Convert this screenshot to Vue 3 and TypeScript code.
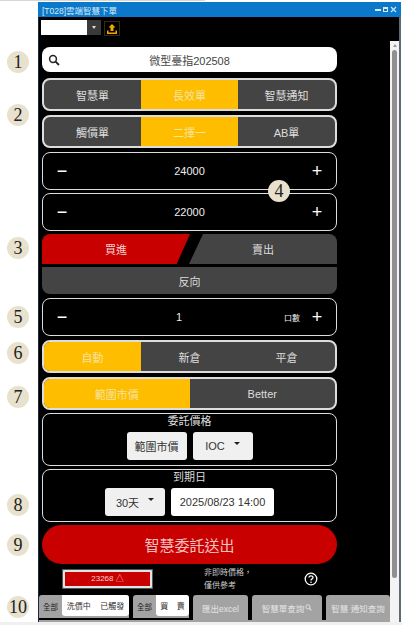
<script setup lang="ts">
// 雲端智慧下單 畫面
const badges = [
  { n: 1, x: 18, y: 62 },
  { n: 2, x: 18, y: 115 },
  { n: 3, x: 18, y: 248 },
  { n: 4, x: 279, y: 191 },
  { n: 5, x: 18, y: 317 },
  { n: 6, x: 18, y: 353 },
  { n: 7, x: 18, y: 397 },
  { n: 8, x: 18, y: 505 },
  { n: 9, x: 18, y: 545 },
  { n: 10, x: 18, y: 607 },
];
</script>

<template>
  <div class="page">
    <div class="window">
      <div class="titlebar">
        <span class="title">[T028]雲端智慧下單</span>
        <span class="win-btns">
          <i class="w-min"></i><i class="w-max"></i>
          <svg width="7" height="7" viewBox="0 0 7 7"><path d="M1 1l5 5M6 1l-5 5" stroke="#cfe6f7" stroke-width="1.2" /></svg>
        </span>
      </div>

      <div class="frame">
        <div class="toolbar">
          <div class="acct"></div>
          <div class="acct-arrow"><i class="caret small"></i></div>
          <div class="upload">
            <svg width="12" height="12" viewBox="0 0 12 12">
              <path d="M6 1L9.5 4.6H7.5V8H4.5V4.6H2.5z" fill="#f5a800" />
              <path d="M1 7.5V11H11V7.5H9.5V9.6H2.5V7.5z" fill="#f5a800" />
            </svg>
          </div>
        </div>

        <div class="body">
          <div class="main">
            <div class="content">
              <div class="search">
                <svg class="search-icon" width="12" height="12" viewBox="0 0 12 12">
                  <circle cx="5" cy="5" r="3.4" fill="none" stroke="#222" stroke-width="1.5" />
                  <path d="M7.6 7.6L11 11" stroke="#222" stroke-width="1.8" />
                </svg>
                <span>微型臺指202508</span>
              </div>

              <div class="seg">
                <div class="seg-item">智慧單</div>
                <div class="seg-item on">長效單</div>
                <div class="seg-item">智慧通知</div>
              </div>
              <div class="seg">
                <div class="seg-item">觸價單</div>
                <div class="seg-item on">二擇一</div>
                <div class="seg-item">AB單</div>
              </div>

              <div class="stepper">
                <span class="minus">−</span><span class="val">24000</span><span class="plus">+</span>
              </div>
              <div class="stepper">
                <span class="minus">−</span><span class="val">22000</span><span class="plus">+</span>
              </div>

              <div class="buysell">
                <div class="buy">買進</div>
                <div class="sell">賣出</div>
              </div>
              <div class="reverse">反向</div>

              <div class="stepper qty">
                <span class="minus">−</span><span class="val">1</span><span class="unit">口數</span><span class="plus">+</span>
              </div>

              <div class="seg">
                <div class="seg-item on">自動</div>
                <div class="seg-item">新倉</div>
                <div class="seg-item">平倉</div>
              </div>
              <div class="seg">
                <div class="seg-item on">範圍市價</div>
                <div class="seg-item">Better</div>
              </div>

              <div class="box">
                <div class="box-title">委託價格</div>
                <div class="box-row">
                  <div class="chip gray w60">範圍市價</div>
                  <div class="chip gray w60">IOC<i class="caret"></i></div>
                </div>
              </div>
              <div class="box">
                <div class="box-title">到期日</div>
                <div class="box-row">
                  <div class="chip gray w60">30天<i class="caret"></i></div>
                  <div class="chip white w103">2025/08/23 14:00</div>
                </div>
              </div>

              <div class="submit">智慧委託送出</div>

              <div class="info">
                <div class="price"><div class="price-in">23268 △</div></div>
                <div class="note">非即時價格，<br />僅供參考</div>
                <svg class="help" width="14" height="14" viewBox="0 0 14 14">
                  <circle cx="7" cy="7" r="5.8" fill="none" stroke="#fff" stroke-width="1.3" />
                  <path d="M5 5.6C5 3.2 9 3.2 9 5.5C9 7 7 6.8 7 8.4" fill="none" stroke="#fff" stroke-width="1.3" />
                  <circle cx="7" cy="10.2" r=".8" fill="#fff" />
                </svg>
              </div>
            </div>

            <!-- 下方頁籤 -->
            <div class="tabs">
              <div class="tab-group first">
                <span class="g">全部</span>
                <span class="w"><b>洗價中</b><b>已觸發</b></span>
              </div>
              <div class="tab-group second">
                <span class="g">全部</span>
                <span class="w"><b>買</b><b>賣</b></span>
              </div>
              <div class="tab-btn t1">匯出excel</div>
              <div class="tab-btn t2">
                智慧單查詢
                <svg width="7" height="7" viewBox="0 0 12 12">
                  <circle cx="5" cy="5" r="3.6" fill="none" stroke="#e4e4e4" stroke-width="1.6" />
                  <path d="M7.6 7.6L11 11" stroke="#e4e4e4" stroke-width="1.8" />
                </svg>
              </div>
              <div class="tab-btn t3">智慧 通知查詢</div>
            </div>
          </div>

          <div class="scrollbar">
            <i class="arrow-up"></i>
            <div class="thumb"></div>
          </div>
        </div>
      </div>
    </div>

    <span v-for="b in badges" :key="b.n" class="badge" :style="{ left: b.x - 11 + 'px', top: b.y - 11 + 'px' }">{{ b.n }}</span>
  </div>
</template>

<style scoped>
.page {
  position: relative;
  width: 402px;
  height: 625px;
  background: #fff;
  padding: 2px 1px 3px 38px;
  box-sizing: border-box;
  overflow: hidden;
  font-family: "Liberation Sans", "Noto Sans CJK TC", sans-serif;
  color: #e6e6e6;
}

.page::before {
  content: "";
  position: absolute;
  left: 0;
  top: 0;
  width: 205px;
  height: 1px;
  background: #d8d8d8;
}

.page::after {
  content: "";
  position: absolute;
  left: 0;
  bottom: 0;
  width: 100%;
  height: 3px;
  background: #f0f0f0;
}

.window {
  height: 100%;
  background: #000;
  display: flex;
  flex-direction: column;
}

.titlebar {
  height: 15px;
  flex: none;
  background: #0b78c9;
  display: flex;
  align-items: center;
  justify-content: space-between;
  padding: 0 4px 0 4px;
  font-size: 8.5px;
  color: #d5e9f8;
}

.win-btns {
  display: flex;
  align-items: center;
  gap: 2px;
}

.w-min {
  width: 6px;
  height: 2px;
  background: #d5e9f8;
}

.w-max {
  width: 5px;
  height: 5px;
  border: 1px solid #d5e9f8;
  border-top-width: 2px;
  box-sizing: border-box;
}

.frame {
  flex: 1;
  min-height: 0;
  display: flex;
  flex-direction: column;
  border-left: 1px solid #1c2a38;
  border-right: 2px solid #5f6b74;
}

.toolbar {
  height: 24px;
  flex: none;
  display: flex;
  align-items: flex-start;
  padding: 3px 0 0 2px;
  box-sizing: border-box;
}

.acct {
  width: 46px;
  height: 15px;
  background: #fff;
}

.acct-arrow {
  width: 14px;
  height: 15px;
  background: #3a3a3a;
  display: flex;
  align-items: center;
  justify-content: center;
}

.upload {
  width: 16px;
  height: 15px;
  margin: 1px 0 0 3px;
  border: 1px solid #3b2c08;
  box-sizing: border-box;
  display: flex;
  align-items: center;
  justify-content: center;
}

.caret {
  display: inline-block;
  width: 0;
  height: 0;
  margin: 0 0 5px 9px;
  border-left: 3px solid transparent;
  border-right: 3px solid transparent;
  border-top: 3px solid #222;
}

.caret.small {
  margin: 0;
  border-left-width: 2.5px;
  border-right-width: 2.5px;
  border-top: 3px solid #ddd;
}

.body {
  flex: 1;
  min-height: 0;
  display: flex;
}

.main {
  flex: 1;
  min-width: 0;
  display: flex;
  flex-direction: column;
  justify-content: space-between;
}

.content {
  width: 295px;
  margin-left: 3px;
  display: flex;
  flex-direction: column;
  padding-top: 6px;
}

.search {
  position: relative;
  height: 25px;
  flex: none;
  background: #fff;
  border-radius: 8px;
  display: flex;
  align-items: center;
  justify-content: center;
  font-size: 11px;
  color: #444;
}

.search-icon {
  position: absolute;
  left: 6px;
  top: 7px;
}

.seg {
  height: 33px;
  flex: none;
  margin-top: 4px;
  border: 2px solid #ddd;
  border-radius: 8px;
  overflow: hidden;
  display: flex;
  box-sizing: border-box;
  background: #444;
}

.search + .seg {
  margin-top: 6px;
}

.seg-item {
  flex: 1;
  display: flex;
  align-items: center;
  justify-content: center;
  font-size: 11px;
  color: #ddd;
}

.seg-item.on {
  background: #ffbd00;
  color: #f6e3a0;
}

.stepper {
  height: 38px;
  flex: none;
  margin-top: 4px;
  border: 1px solid #ddd;
  border-radius: 8px;
  display: flex;
  align-items: center;
  padding: 0 13px;
  box-sizing: border-box;
  font-size: 11px;
  color: #eee;
}

.stepper + .stepper {
  margin-top: 3px;
}

.minus,
.plus {
  font-size: 18px;
  line-height: 18px;
  width: 12px;
  text-align: center;
  color: #fff;
}

.val {
  flex: 1;
  text-align: center;
}

.qty .val {
  padding-left: 6px;
}

.unit {
  font-size: 8px;
  margin-right: 11px;
}

.buysell {
  height: 30px;
  flex: none;
  margin-top: 3px;
  border-radius: 8px 8px 0 0;
  overflow: hidden;
  display: flex;
  font-size: 11px;
}

.buy {
  width: 148px;
  background: #c80000;
  clip-path: polygon(0 0, 100% 0, 91% 100%, 0 100%);
  display: flex;
  align-items: center;
  justify-content: center;
  color: #f6d5d5;
}

.sell {
  flex: 1;
  margin-left: -1px;
  background: #444;
  clip-path: polygon(9.5% 0, 100% 0, 100% 100%, 0 100%);
  display: flex;
  align-items: center;
  justify-content: center;
  color: #ddd;
}

.reverse {
  height: 27px;
  flex: none;
  margin-top: 3px;
  background: #444;
  border-radius: 0 0 8px 8px;
  display: flex;
  align-items: center;
  justify-content: center;
  font-size: 11px;
  color: #ddd;
}

.box {
  height: 53px;
  flex: none;
  margin-top: 3px;
  border: 1px solid #ddd;
  border-radius: 8px;
  box-sizing: border-box;
  text-align: center;
}

.box-title {
  font-size: 11px;
  line-height: 14px;
  color: #ddd;
}

.box-row {
  display: flex;
  justify-content: center;
  gap: 6px;
  margin-top: 4px;
}

.chip {
  height: 28px;
  border-radius: 3px;
  display: flex;
  align-items: center;
  justify-content: center;
  font-size: 11px;
  color: #333;
}

.gray {
  background: #f0f0f0;
}

.white {
  background: #fff;
}

.w60 {
  width: 60px;
}

.w103 {
  width: 103px;
}

.submit {
  height: 39px;
  flex: none;
  margin-top: 3px;
  background: #c80000;
  border-radius: 20px;
  display: flex;
  align-items: center;
  justify-content: center;
  font-size: 15px;
  color: #f4c0c0;
}

.info {
  display: flex;
  align-items: center;
  height: 21px;
  flex: none;
  margin-top: 4px;
  padding-left: 20px;
}

.price {
  width: 91px;
  height: 20px;
  background: #c80000;
  border: 3px solid #e0e4e6;
  outline: 1px solid #555;
  outline-offset: -1px;
  box-sizing: border-box;
  border-radius: 2px;
}

.price-in {
  line-height: 14px;
  text-align: center;
  font-size: 8px;
  color: #fbd0d0;
}

.note {
  margin-left: 51px;
  font-size: 8px;
  line-height: 13px;
  color: #ccc;
}

.help {
  margin-left: 52px;
}

.scrollbar {
  width: 9px;
  flex: none;
  background: #f4f4f4;
  display: flex;
  flex-direction: column;
  align-items: center;
}

.arrow-up {
  margin-top: 3px;
  border-left: 2.5px solid transparent;
  border-right: 2.5px solid transparent;
  border-bottom: 3px solid #999;
}

.thumb {
  width: 5px;
  height: 528px;
  margin-top: 3px;
  border-radius: 3px;
  background: #909090;
}

.tabs {
  height: 27px;
  flex: none;
  display: flex;
  gap: 4px;
  font-size: 8px;
  border-bottom: 2px solid #a3a3a3;
  box-sizing: border-box;
}

.tab-group {
  display: flex;
  height: 23px;
  background: #a3a3a3;
  border-radius: 3px 3px 0 0;
  overflow: hidden;
  color: #222;
}

.first {
  width: 90px;
}

.second {
  width: 56px;
}

.g {
  width: 23px;
  flex: none;
  font-size: 7.5px;
  display: flex;
  align-items: center;
  justify-content: center;
}

.w {
  flex: 1;
  background: #fff;
  display: flex;
  justify-content: space-around;
  align-items: center;
  color: #333;
  border-radius: 0 0 3px 3px;
  margin-bottom: 2px;
}

.w b {
  font-weight: 400;
}

.tab-btn {
  background: #a3a3a3;
  border-radius: 3px 3px 0 0;
  display: flex;
  align-items: center;
  justify-content: center;
  gap: 1px;
  font-size: 8.5px;
  color: #e4e4e4;
  white-space: nowrap;
  flex: none;
  overflow: hidden;
}

.t1 {
  width: 55px;
}

.t2 {
  width: 70px;
}

.t3 {
  width: 64px;
}

.badge {
  position: absolute;
  width: 22px;
  height: 22px;
  border-radius: 50%;
  background: #e8e1cd;
  color: #222;
  font-family: "Liberation Serif", serif;
  font-size: 18px;
  line-height: 22px;
  text-align: center;
}
</style>
